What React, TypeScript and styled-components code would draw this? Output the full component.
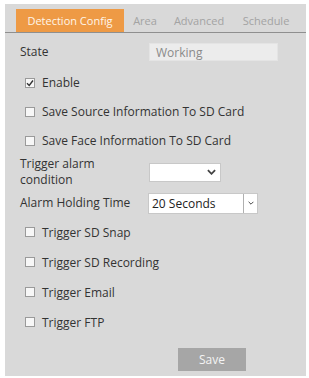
import React from "react";
import styled, { createGlobalStyle } from "styled-components";

const Global = createGlobalStyle`
  html, body { margin: 0; padding: 0; background: #ffffff; }
  body { font-family: "Open Sans", "Noto Sans", sans-serif; }
`;

const Panel = styled.div`
  margin: 4px 0 0 5px;
  width: 301px;
  height: 372px;
  background: #d9d9d9;
  display: flex;
  flex-direction: column;
  box-sizing: border-box;
`;

const TabBar = styled.div`
  display: flex;
  align-items: stretch;
  height: 23px;
  margin-top: 5px;
  padding-left: 11px;
  border-bottom: 1px solid #8f8f8f;
`;

const Tab = styled.div<{ $active?: boolean; $w: number }>`
  width: ${(p) => p.$w}px;
  display: flex;
  align-items: center;
  justify-content: center;
  font-size: 11px;
  color: ${(p) => (p.$active ? "#fff6ea" : "#a3a3a3")};
  background: ${(p) => (p.$active ? "#ee9a45" : "transparent")};
`;

const Body = styled.div`
  display: flex;
  flex-direction: column;
  padding-left: 15px;
  color: #333;
  font-size: 12px;
`;

const FieldRow = styled.div<{ $h: number; $mt?: number; $mb?: number }>`
  display: flex;
  align-items: center;
  height: ${(p) => p.$h}px;
  margin-top: ${(p) => p.$mt ?? 0}px;
  margin-bottom: ${(p) => p.$mb ?? 0}px;
`;

const Label = styled.div<{ $w: number }>`
  width: ${(p) => p.$w}px;
  line-height: 16px;
  flex: none;
`;

const TextBox = styled.div`
  width: 129px;
  height: 18px;
  box-sizing: border-box;
  background: #ececec;
  border: 1px solid #e4e4e4;
  color: #8a8a8a;
  padding-left: 6px;
  display: flex;
  align-items: center;
  font-size: 12px;
`;

const Select = styled.div<{ $w: number; $h: number }>`
  width: ${(p) => p.$w}px;
  height: ${(p) => p.$h}px;
  box-sizing: border-box;
  background: #fff;
  border: 1px solid #c8c8c8;
  display: flex;
  align-items: center;
  font-size: 12px;
  color: #222;
`;

const SelectText = styled.div`
  flex: 1;
  padding-left: 3px;
`;

const Arrow = styled.div<{ $divided?: boolean }>`
  width: ${(p) => (p.$divided ? 13 : 14)}px;
  height: 100%;
  display: flex;
  align-items: center;
  justify-content: center;
  border-left: ${(p) => (p.$divided ? "1px solid #b0b0b0" : "none")};
  margin-right: ${(p) => (p.$divided ? 0 : 2)}px;
`;

const CheckRow = styled.label<{ $h: number }>`
  display: flex;
  align-items: center;
  height: ${(p) => p.$h}px;
  padding-left: 5px;
  gap: 7px;
  font-size: 12px;
  color: #333;
`;

const Box = styled.span`
  width: 10px;
  height: 10px;
  box-sizing: border-box;
  border: 1px solid #9a9a9a;
  background: #f7f7f7;
  display: flex;
  align-items: center;
  justify-content: center;
`;

const Spacer = styled.div<{ $h: number }>`
  height: ${(p) => p.$h}px;
`;

const Footer = styled.div`
  display: flex;
  padding-left: 173px;
  margin-top: 11px;
`;

const SaveButton = styled.button`
  width: 68px;
  height: 23px;
  border: none;
  background: #a6a6a6;
  color: #f4f4f4;
  font-family: "Open Sans", sans-serif;
  font-size: 12px;
  padding: 0;
`;

const Check = ({ checked, label, h }: { checked?: boolean; label: string; h: number }) => (
  <CheckRow $h={h}>
    <Box>
      {checked && (
        <svg width="8" height="8" viewBox="0 0 8 8">
          <path d="M1 4.2 L3.2 6.4 L7 1.5" fill="none" stroke="#333" strokeWidth="1.4" />
        </svg>
      )}
    </Box>
    {label}
  </CheckRow>
);

const Chevron = ({ small }: { small?: boolean }) => (
  <svg width={small ? 6 : 9} height={small ? 4 : 6} viewBox="0 0 10 6">
    <path d="M1 1 L5 5 L9 1" fill="none" stroke="#444" strokeWidth={small ? 1.6 : 2} />
  </svg>
);

export default function App() {
  return (
    <>
      <Global />
      <Panel>
        <TabBar>
          <Tab $active $w={108}>Detection Config</Tab>
          <Tab $w={42}>Area</Tab>
          <Tab $w={66}>Advanced</Tab>
          <Tab $w={68}>Schedule</Tab>
        </TabBar>
        <Body>
          <FieldRow $h={20} $mt={9}>
            <Label $w={129}>State</Label>
            <TextBox>Working</TextBox>
          </FieldRow>
          <Spacer $h={6} />
          <Check checked label="Enable" h={29} />
          <Check label="Save Source Information To SD Card" h={29} />
          <Check label="Save Face Information To SD Card" h={29} />
          <FieldRow $h={34}>
            <Label $w={129}>
              Trigger alarm
              <br />
              condition
            </Label>
            <Select $w={72} $h={19}>
              <SelectText />
              <Arrow>
                <Chevron />
              </Arrow>
            </Select>
          </FieldRow>
          <FieldRow $h={28}>
            <Label $w={128}>Alarm Holding Time</Label>
            <Select $w={110} $h={21}>
              <SelectText>20 Seconds</SelectText>
              <Arrow $divided>
                <Chevron small />
              </Arrow>
            </Select>
          </FieldRow>
          <Check label="Trigger SD Snap" h={30} />
          <Check label="Trigger SD Recording" h={30} />
          <Check label="Trigger Email" h={30} />
          <Check label="Trigger FTP" h={30} />
        </Body>
        <Footer>
          <SaveButton>Save</SaveButton>
        </Footer>
      </Panel>
    </>
  );
}
